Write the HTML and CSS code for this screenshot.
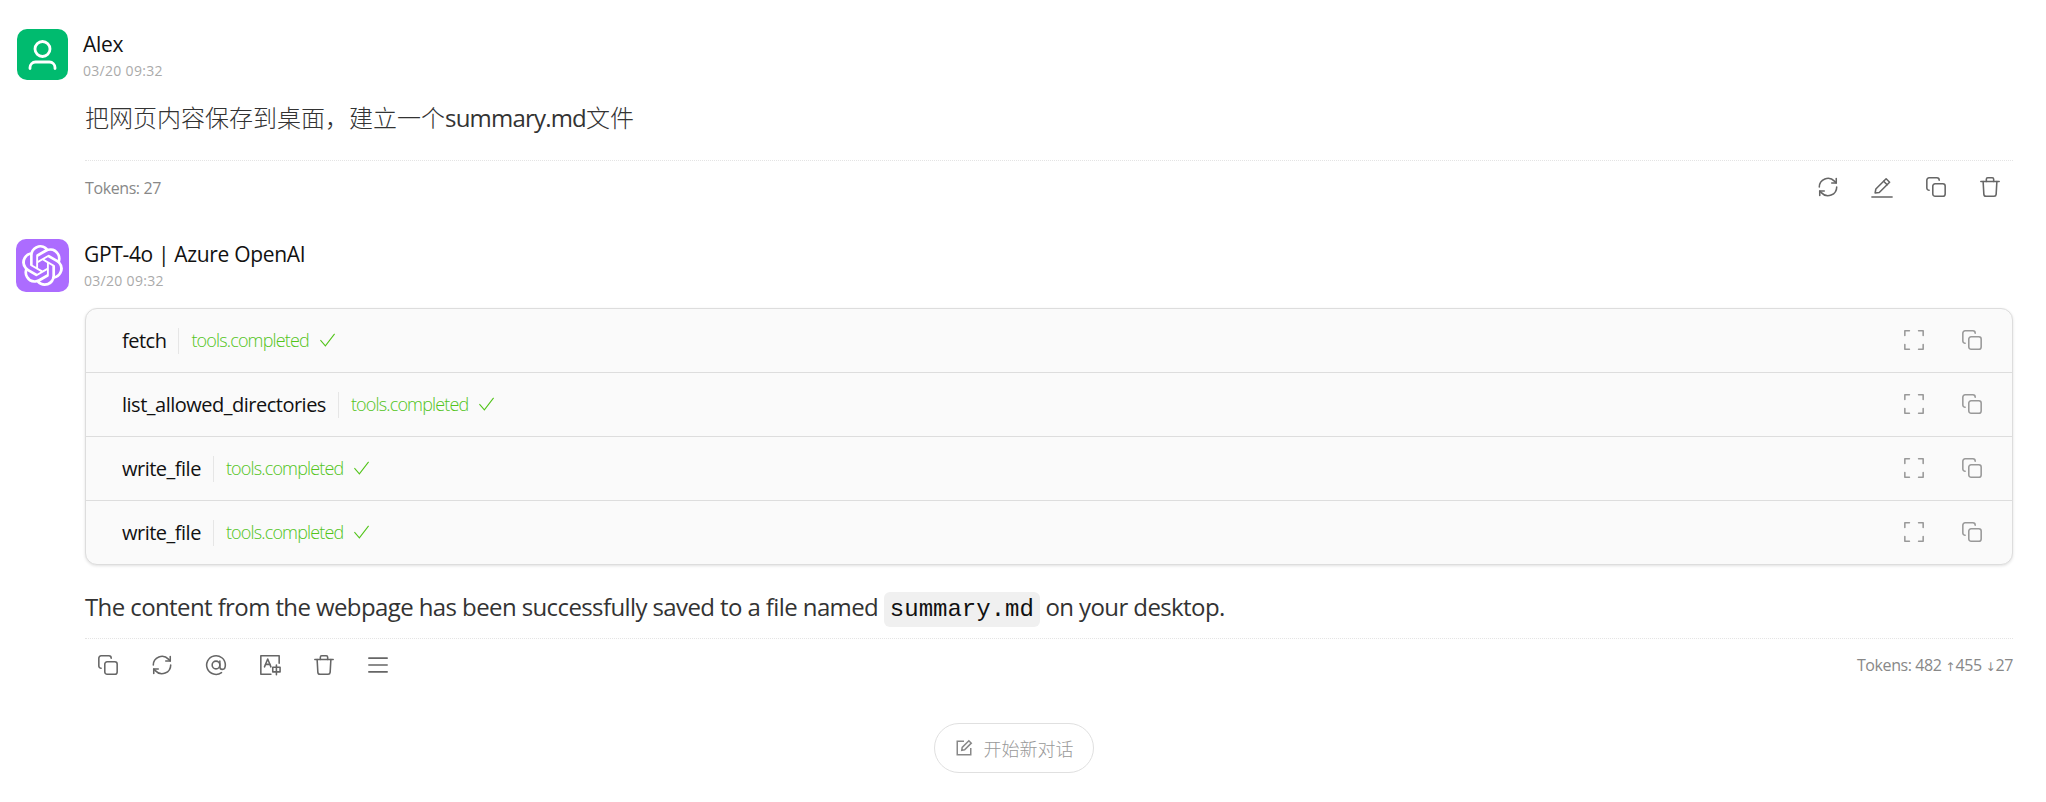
FILE: index.html
```html
<!DOCTYPE html>
<html lang="en">

<head>
  <meta charset="UTF-8">
  <meta name="viewport" content="width=device-width, initial-scale=1.0">
  <title>Chat</title>
  <link rel="stylesheet" href="styles.css">
</head>

<body>
  <svg class="defs" width="0" height="0" aria-hidden="true">
    <symbol id="i-copy" viewBox="0 0 24 24">
      <rect x="8.5" y="8.5" width="13.5" height="13.5" rx="2.5"></rect>
      <path d="M4.5 15.5c-1.400 0-2.500-1.100-2.500-2.500V4.500C2 3.100 3.100 2 4.500 2H13c1.400 0 2.500 1.100 2.500 2.500"></path>
    </symbol>
    <symbol id="i-sync" viewBox="0 0 24 24">
      <path d="M2.500 12a9.500 9.500 0 0 1 16.500-6.400L21 7.500"></path>
      <path d="M21.500 12a9.500 9.500 0 0 1-16.500 6.400L3 16.500"></path>
      <path d="M21 2.800v4.900h-4.900"></path>
      <path d="M3 21.200v-4.900h4.900"></path>
    </symbol>
    <symbol id="i-pen" viewBox="0 0 24 24">
      <path d="M1 23h22"></path>
      <path d="M4.500 18.500l.8-4.300L16.500 3l3.800 3.800L9 18l-4.500.5z"></path>
      <path d="M13.800 5.700l3.800 3.800"></path>
    </symbol>
    <symbol id="i-trash" viewBox="0 0 24 24">
      <path d="M2 6h20"></path>
      <path d="M4.500 6l.8 14c.1 1.300 1 2 2.200 2h9c1.200 0 2.100-.7 2.200-2l.8-14"></path>
      <path d="M8 6V3.500C8 2.600 8.600 2 9.500 2h5c.9 0 1.500.6 1.500 1.500V6"></path>
    </symbol>
    <symbol id="i-full" viewBox="0 0 24 24">
      <path d="M2 7V2h5"></path>
      <path d="M17 2h5v5"></path>
      <path d="M22 17v5h-5"></path>
      <path d="M7 22H2v-5"></path>
    </symbol>
    <symbol id="i-check" viewBox="0 0 24 24">
      <path d="M2 13l7 8L22 4"></path>
    </symbol>
  </svg>

  <div class="msg">
    <div class="msg-head">
      <div class="avatar avatar-user">
        <svg viewBox="0 0 51 51" class="user-icon">
          <circle cx="25.500" cy="20" r="7.500"></circle>
          <path d="M13 39.500v-1c0-3 2.500-5.500 5.500-5.500h14c3 0 5.500 2.500 5.500 5.500v1"></path>
        </svg>
      </div>
      <div class="who">
        <div class="name">Alex</div>
        <div class="time">03/20 09:32</div>
      </div>
    </div>
    <div class="msg-body">
      <p class="text text-user">把网页内容保存到桌面，建立一个<span class="latin">summary.md</span>文件</p>
      <div class="msg-foot foot-user">
        <span class="tokens">Tokens: 27</span>
        <div class="actions">
          <span class="act"><svg class="ico"><use href="#i-sync"></use></svg></span>
          <span class="act"><svg class="ico"><use href="#i-pen"></use></svg></span>
          <span class="act"><svg class="ico"><use href="#i-copy"></use></svg></span>
          <span class="act"><svg class="ico"><use href="#i-trash"></use></svg></span>
        </div>
      </div>
    </div>
  </div>

  <div class="msg">
    <div class="msg-head">
      <div class="avatar avatar-gpt">
        <svg viewBox="0 0 24 24" class="gpt-icon">
          <path d="M22.2819 9.8211a5.9847 5.9847 0 0 0-.5157-4.9108 6.0462 6.0462 0 0 0-6.5098-2.9A6.0651 6.0651 0 0 0 4.9807 4.1818a5.9847 5.9847 0 0 0-3.9977 2.9 6.0462 6.0462 0 0 0 .7427 7.0966 5.98 5.98 0 0 0 .511 4.9107 6.051 6.051 0 0 0 6.5146 2.9001A5.9847 5.9847 0 0 0 13.2599 24a6.0557 6.0557 0 0 0 5.7718-4.2058 5.9894 5.9894 0 0 0 3.9977-2.9001 6.0557 6.0557 0 0 0-.7475-7.0729zm-9.022 12.6081a4.4755 4.4755 0 0 1-2.8764-1.0408l.1419-.0804 4.7783-2.7582a.7948.7948 0 0 0 .3927-.6813v-6.7369l2.02 1.1686a.071.071 0 0 1 .038.052v5.5826a4.504 4.504 0 0 1-4.4945 4.4944zm-9.6607-4.1254a4.4708 4.4708 0 0 1-.5346-3.0137l.142.0852 4.783 2.7582a.7712.7712 0 0 0 .7806 0l5.8428-3.3685v2.3324a.0804.0804 0 0 1-.0332.0615L9.74 19.9502a4.4992 4.4992 0 0 1-6.1408-1.6464zM2.3408 7.8956a4.485 4.485 0 0 1 2.3655-1.9728V11.6a.7664.7664 0 0 0 .3879.6765l5.8144 3.3543-2.0201 1.1685a.0757.0757 0 0 1-.071 0l-4.8303-2.7865A4.504 4.504 0 0 1 2.3408 7.872zm16.5963 3.8558L13.1038 8.364 15.1192 7.2a.0757.0757 0 0 1 .071 0l4.8303 2.7913a4.4944 4.4944 0 0 1-.6765 8.1042v-5.6772a.79.79 0 0 0-.407-.667zm2.0107-3.0231l-.142-.0852-4.7735-2.7818a.7759.7759 0 0 0-.7854 0L9.409 9.2297V6.8974a.0662.0662 0 0 1 .0284-.0615l4.8303-2.7866a4.4992 4.4992 0 0 1 6.6802 4.66zM8.3065 12.863l-2.02-1.1638a.0804.0804 0 0 1-.038-.0567V6.0742a4.4992 4.4992 0 0 1 7.3757-3.4537l-.142.0805L8.704 5.459a.7948.7948 0 0 0-.3927.6813zm1.0976-2.3654l2.602-1.4998 2.6069 1.4998v2.9994l-2.5974 1.4997-2.6067-1.4997Z"></path>
        </svg>
      </div>
      <div class="who">
        <div class="name">GPT-4o | Azure OpenAI</div>
        <div class="time">03/20 09:32</div>
      </div>
    </div>
    <div class="msg-body">
      <div class="tools">
        <div class="tool">
          <span class="tool-name">fetch</span>
          <span class="tool-status">tools.completed <svg class="check"><use href="#i-check"></use></svg></span>
          <span class="tool-btn"><svg class="ico"><use href="#i-full"></use></svg></span>
          <span class="tool-btn"><svg class="ico"><use href="#i-copy"></use></svg></span>
        </div>
        <div class="tool">
          <span class="tool-name">list_allowed_directories</span>
          <span class="tool-status">tools.completed <svg class="check"><use href="#i-check"></use></svg></span>
          <span class="tool-btn"><svg class="ico"><use href="#i-full"></use></svg></span>
          <span class="tool-btn"><svg class="ico"><use href="#i-copy"></use></svg></span>
        </div>
        <div class="tool">
          <span class="tool-name">write_file</span>
          <span class="tool-status">tools.completed <svg class="check"><use href="#i-check"></use></svg></span>
          <span class="tool-btn"><svg class="ico"><use href="#i-full"></use></svg></span>
          <span class="tool-btn"><svg class="ico"><use href="#i-copy"></use></svg></span>
        </div>
        <div class="tool">
          <span class="tool-name">write_file</span>
          <span class="tool-status">tools.completed <svg class="check"><use href="#i-check"></use></svg></span>
          <span class="tool-btn"><svg class="ico"><use href="#i-full"></use></svg></span>
          <span class="tool-btn"><svg class="ico"><use href="#i-copy"></use></svg></span>
        </div>
      </div>
      <p class="text text-reply">The content from the webpage has been successfully saved to a file named <code>summary.md</code> on your desktop.</p>
      <div class="msg-foot foot-reply">
        <div class="actions">
          <span class="act"><svg class="ico"><use href="#i-copy"></use></svg></span>
          <span class="act"><svg class="ico"><use href="#i-sync"></use></svg></span>
          <span class="act">
            <svg class="ico" viewBox="0 0 24 24">
              <circle cx="12" cy="12" r="4.200"></circle>
              <path d="M16.200 7.800v6c0 2 1.200 3 2.800 3 2 0 3.200-2 3.200-4.800A10.200 10.200 0 1 0 18 20.300"></path>
            </svg>
          </span>
          <span class="act">
            <svg class="ico" viewBox="0 0 24 24">
              <path d="M22 10V2H2v20h11"></path>
              <path d="M6 14l3.500-8.500L13 14"></path>
              <path d="M7.200 11.300h4.600"></path>
              <rect x="15" y="14.500" width="8" height="5"></rect>
              <path d="M19 12v10.500"></path>
            </svg>
          </span>
          <span class="act"><svg class="ico"><use href="#i-trash"></use></svg></span>
          <span class="act">
            <svg class="ico" viewBox="0 0 24 24">
              <path d="M2 4.500h20"></path>
              <path d="M2 12h20"></path>
              <path d="M2 19.500h20"></path>
            </svg>
          </span>
        </div>
        <span class="tokens">Tokens: 482 <span class="arrow">↑</span>455 <span class="arrow">↓</span>27</span>
      </div>
    </div>
  </div>

  <div class="new-wrap">
    <div class="new-chat">
      <svg class="new-icon" viewBox="0 0 24 24">
        <path d="M12 3H3v18h18v-9"></path>
        <path d="M9 15l.6-3.800L18.500 2.300l3.200 3.200-8.900 8.900L9 15z"></path>
      </svg>
      <span>开始新对话</span>
    </div>
  </div>
</body>

</html>
```

FILE: styles.css
```css
* {
  padding: 0;
  margin: 0;
  box-sizing: border-box;
}

body {
  background-color: #fff;
  color: #333;
  font-family: "Open Sans", "Noto Sans CJK SC", sans-serif;
  height: 802px;
  overflow: hidden;
  padding-top: 29px;
}

.defs {
  position: absolute;
}

.ico {
  width: 22px;
  height: 22px;
  fill: none;
  stroke: currentColor;
  stroke-width: 1.7;
  stroke-linecap: round;
  stroke-linejoin: round;
  display: block;
}

/* message header */
.msg-head {
  display: flex;
  align-items: flex-start;
  padding-left: 17px;
}

.avatar {
  width: 51px;
  height: 51px;
  border-radius: 10px;
  margin-right: 15px;
  flex-shrink: 0;
}

.avatar-user {
  background-color: #00bb6f;
}

.avatar-gpt {
  width: 53px;
  height: 53px;
  margin-left: -1px;
  background-color: #ac6cff;
  display: flex;
  align-items: center;
  justify-content: center;
}

.user-icon {
  display: block;
  fill: none;
  stroke: #fff;
  stroke-width: 2.800;
  stroke-linecap: round;
}

.gpt-icon {
  width: 41px;
  height: 41px;
  fill: #fff;
}

.name {
  font-size: 21px;
  line-height: 28px;
  margin-top: 1px;
  color: #111;
  letter-spacing: -0.33px;
}

.time {
  font-size: 14px;
  line-height: 20px;
  margin-top: 3px;
  color: #aaa;
  letter-spacing: .3px;
}

/* message content */
.msg-body {
  padding: 0 33px 0 85px;
}

.text {
  font-size: 24px;
  line-height: 36px;
  color: #333;
}

.text-user {
  margin-top: 19px;
  font-weight: 300;
}

.latin {
  font-weight: 400;
  letter-spacing: -0.8px;
}

.text-reply {
  margin-top: 24px;
  letter-spacing: -0.6px;
}

code {
  font-family: "Liberation Mono", monospace;
  font-size: 24px;
  background-color: #f0f0f0;
  border-radius: 6px;
  padding: 4px 6px;
  letter-spacing: 0;
  color: #111;
}

.msg-foot {
  display: flex;
  align-items: center;
  justify-content: space-between;
  border-top: 1px dotted #e4e4e4;
}

.foot-user {
  margin-top: 24px;
  height: 52px;
  margin-bottom: 27px;
}

.foot-reply {
  margin-top: 10px;
  height: 52px;
}

.tokens {
  font-size: 16px;
  color: #888;
  letter-spacing: -0.4px;
}

.foot-user .tokens {
  margin-top: 2px;
}

.arrow {
  font-family: "DejaVu Sans", sans-serif;
  font-size: 12px;
  letter-spacing: 0;
}

.actions {
  display: flex;
  color: #666;
}

.foot-user .actions {
  margin-right: -4px;
}

.foot-reply .actions {
  margin-left: -4px;
}

.act {
  width: 54px;
  height: 40px;
  display: flex;
  align-items: center;
  justify-content: center;
}

/* tool list */
.tools {
  margin-top: 16px;
  border: 1px solid #ddd;
  border-radius: 12px;
  background-color: #fafafa;
  box-shadow: 0 1px 3px rgba(0, 0, 0, .12);
  overflow: hidden;
}

.tool {
  height: 64px;
  display: flex;
  align-items: center;
  padding: 0 11px 2px 36px;
  border-top: 1px solid #ddd;
}

.tool:first-child {
  border-top: 0;
  height: 63px;
}

.tool-name {
  font-size: 20px;
  color: #111;
  padding-right: 12px;
  border-right: 1px solid #e6e6e6;
  line-height: 26px;
  letter-spacing: -0.5px;
  position: relative;
  top: 1px;
}

.tool-status {
  flex: 1;
  display: flex;
  align-items: center;
  gap: 10px;
  margin-left: 12px;
  font-size: 18px;
  font-weight: 300;
  color: #52c41a;
  letter-spacing: -0.85px;
}

.check {
  width: 17px;
  height: 17px;
  fill: none;
  stroke: #52c41a;
  stroke-width: 1.500;
}

.tool-btn {
  width: 58px;
  display: flex;
  justify-content: center;
  color: #999;
}

/* new chat */
.new-wrap {
  display: flex;
  justify-content: center;
  padding-top: 33px;
  padding-right: 18px;
}

.new-chat {
  width: 160px;
  height: 50px;
  border: 1px solid #e0e0e0;
  border-radius: 25px;
  display: flex;
  align-items: center;
  justify-content: center;
  gap: 11px;
  font-size: 18px;
  font-weight: 300;
  color: #999;
}

.new-icon {
  width: 18px;
  height: 18px;
  fill: none;
  stroke: #888;
  stroke-width: 2;
}
```
